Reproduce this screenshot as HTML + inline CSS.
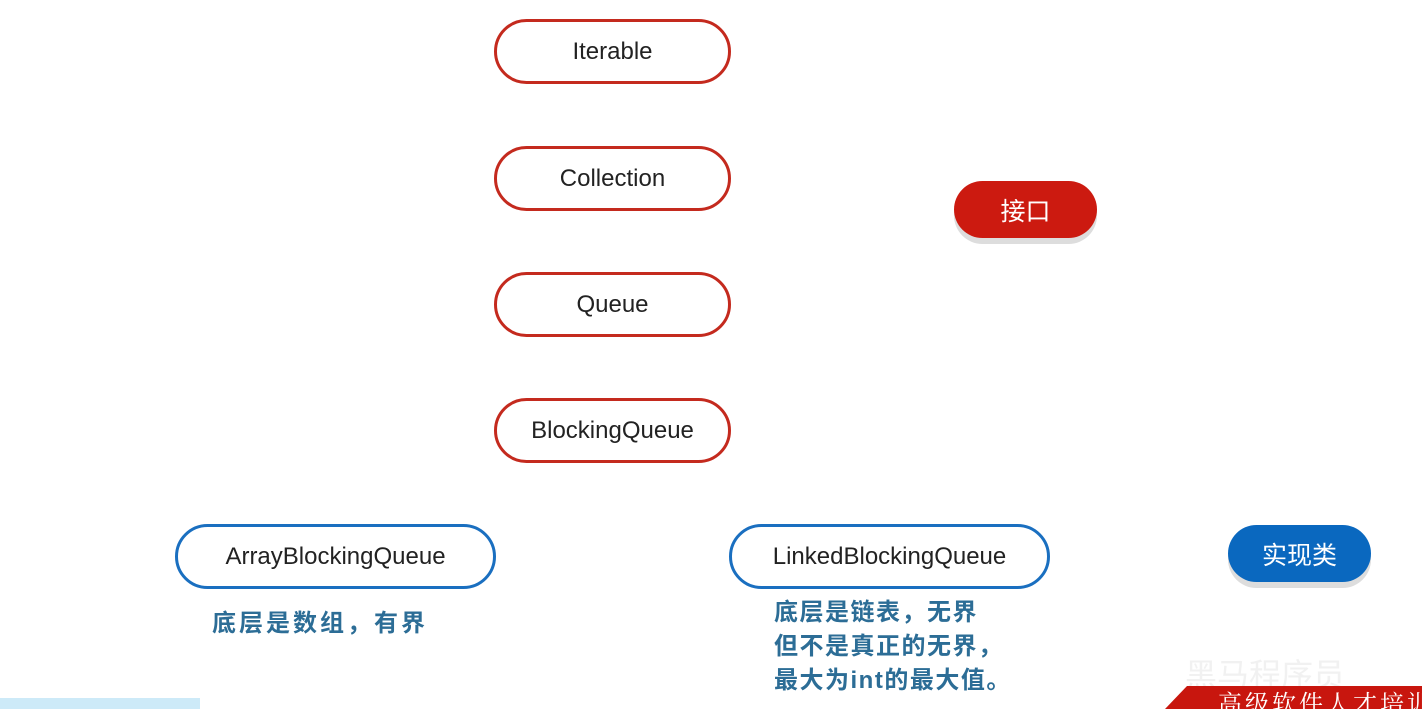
<!DOCTYPE html>
<html><head><meta charset="utf-8"><style>
body{margin:0;width:1422px;height:709px;background:#fff;position:relative;overflow:hidden;font-family:"Liberation Sans","Noto Sans CJK SC",sans-serif}
.b{position:absolute;box-sizing:border-box;border:3px solid #c42a1e;border-radius:33px;display:flex;align-items:center;justify-content:center;font-size:24px;color:#222;height:65px}
.bl{border-color:#1a6fc0}
.pill{position:absolute;border-radius:29px;color:#fff;font-size:25px;display:flex;align-items:center;justify-content:center;box-shadow:0 6px 0 #ddd;width:143px;height:57px}
.note{position:absolute;color:#2c6d96;font-size:24px;font-weight:bold;line-height:34px;letter-spacing:3px}
</style></head><body>
<div class="b" style="left:494px;top:19px;width:237px">Iterable</div>
<div class="b" style="left:494px;top:146px;width:237px">Collection</div>
<div class="b" style="left:494px;top:272px;width:237px">Queue</div>
<div class="b" style="left:494px;top:398px;width:237px">BlockingQueue</div>
<div class="b bl" style="left:175px;top:524px;width:321px">ArrayBlockingQueue</div>
<div class="b bl" style="left:729px;top:524px;width:321px">LinkedBlockingQueue</div>
<div class="pill" style="left:954px;top:181px;background:#cc1a10">接口</div>
<div class="pill" style="left:1228px;top:525px;background:#0a68bf">实现类</div>
<div class="note" style="left:212px;top:607px">底层是数组，有界</div>
<div class="note" style="left:774px;top:596px;letter-spacing:1.5px">底层是链表，无界<br>但不是真正的无界，<br>最大为int的最大值。</div>
<div style="position:absolute;left:0;top:698px;width:200px;height:11px;background:#cdeaf8"></div>
<div style="position:absolute;left:1185px;top:650px;color:rgba(240,240,240,.9);font-size:32px">黑马程序员</div>
<div style="position:absolute;left:1165px;top:686px;width:257px;height:23px;background:#c8160e;clip-path:polygon(22px 0,100% 0,100% 100%,0 100%)"></div>
<div style="position:absolute;left:1218px;top:684px;color:#fff;font-family:'Noto Serif CJK SC',serif;font-size:24px;letter-spacing:3px;white-space:nowrap">高级软件人才培训</div>
</body></html>
